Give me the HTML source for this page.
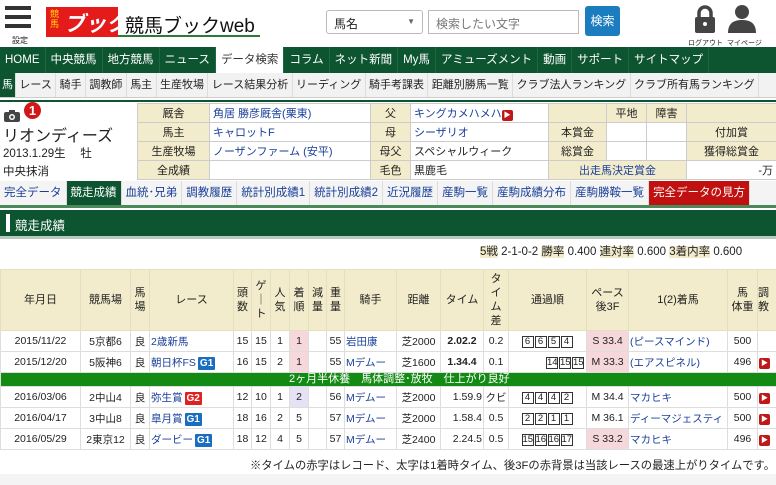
<!DOCTYPE html>
<html><head><meta charset="utf-8">
<style>
*{margin:0;padding:0;box-sizing:border-box}
body{width:776px;height:485px;overflow:hidden;background:#fff;font-family:"Liberation Sans","Noto Sans CJK JP",sans-serif;font-size:11px;color:#222;position:relative}
.a{position:absolute}
a,.lk{color:#1a3f9a;text-decoration:none}
.nav{top:47px;left:0;width:776px;height:26px;background:#0d5430;color:#fff;font-size:11.5px;white-space:nowrap;overflow:hidden}
.nav span{display:inline-block;height:26px;line-height:26px;padding:0 5px;border-right:1px solid #1e6a40}
.sub{top:73px;left:0;width:776px;height:25px;background:#f2f2f2;font-size:11px;white-space:nowrap;border-bottom:1px solid #ccc;overflow:hidden}
.sub span{display:inline-block;height:25px;line-height:25px;padding:0 3.4px;border-right:1px solid #ddd}
table{border-collapse:collapse;table-layout:fixed}
.info td{border:1px solid #ccc;height:19px;padding:0 3px;font-size:11px;white-space:nowrap;overflow:hidden}
.bg{background:#f3eccc;text-align:center}
.tabs{top:181px;left:0;width:776px;height:24px;font-size:11.5px;white-space:nowrap;background:#f4f4f4;overflow:hidden}
.tabs span{display:inline-block;height:24px;line-height:24px;padding:0 4px;border-right:1px solid #ddd;color:#1a3f9a}
.rt td{border:1px solid #ddd;height:21px;text-align:center;font-size:10.5px;white-space:nowrap;overflow:hidden;padding:0 1px}
.rt th{border:1px solid #e4dfc0;background:#f3eccc;font-weight:normal;font-size:11px;line-height:14px;height:61px}
.g{display:inline-block;color:#fff;font-size:10px;font-weight:bold;padding:0 2px;line-height:13px;border-radius:1px;margin-left:2px}
.g1{background:#1a6ec0}.g2{background:#d22}
.bx{display:inline-block;border:1px solid #333;width:12px;height:12px;line-height:10px;font-size:9.5px;margin-right:1px}
.pk{background:#f6d8dc}
.play{display:inline-block;width:11px;height:11px;background:#c01818;border-radius:2px;color:#fff;font-size:7px;line-height:11px;text-align:center}
</style></head><body>
<div class="a" style="left:5px;top:6px;width:26px;height:4px;background:#333"></div>
<div class="a" style="left:5px;top:15px;width:26px;height:4px;background:#333"></div>
<div class="a" style="left:5px;top:24px;width:26px;height:4px;background:#333"></div>
<div class="a" style="left:12px;top:35px;font-size:8px">設定</div>
<div class="a" style="left:46px;top:7px;width:72px;height:30px;background:#e51a1a;"></div>
<div class="a" style="left:50px;top:9px;font-size:9px;line-height:10px;color:#ffd700;width:8px">競馬</div>
<div class="a" style="left:64px;top:8px;font-size:21px;font-style:italic;font-weight:bold;color:#fff;white-space:nowrap">ブック</div>
<div class="a" style="left:118px;top:35px;width:142px;height:2px;background:#2a7a3a"></div>
<div class="a" style="left:125px;top:11px;font-size:19px;color:#111;white-space:nowrap">競馬ブックweb</div>
<div class="a" style="left:326px;top:10px;width:97px;height:24px;border:1px solid #bbb;border-radius:3px;padding:4px 7px;font-size:12px">馬名<span style="position:absolute;right:7px;top:6px;font-size:8px;color:#666">▼</span></div>
<div class="a" style="left:428px;top:10px;width:151px;height:24px;border:1px solid #bbb;padding:4px 7px;font-size:12px;color:#777">検索したい文字</div>
<div class="a" style="left:585px;top:6px;width:35px;height:30px;background:#1b7cc0;border-radius:3px;color:#fff;font-size:12px;line-height:30px;text-align:center">検索</div>
<svg class="a" style="left:694px;top:4px" width="22" height="30"><path d="M5 13V9a6 6 0 0 1 12 0v4" stroke="#444" stroke-width="3.5" fill="none"/><rect x="1" y="13" width="20" height="16" rx="2" fill="#444"/><circle cx="11" cy="20" r="2" fill="#fff"/></svg>
<svg class="a" style="left:727px;top:3px" width="30" height="30"><circle cx="15" cy="9" r="7" fill="#444"/><path d="M1 30c0-10 6-13 14-13s14 3 14 13z" fill="#444"/></svg>
<div class="a" style="left:688px;top:38px;font-size:7px">ログアウト</div>
<div class="a" style="left:727px;top:38px;font-size:7px">マイページ</div>
<div class="a nav"><span>HOME</span><span>中央競馬</span><span>地方競馬</span><span>ニュース</span><span style="background:#fff;color:#333">データ検索</span><span>コラム</span><span>ネット新聞</span><span>My馬</span><span>アミューズメント</span><span>動画</span><span>サポート</span><span>サイトマップ</span></div>
<div class="a sub"><span style="background:#0d5430;color:#fff;padding:0 2px">馬</span><span>レース</span><span>騎手</span><span>調教師</span><span>馬主</span><span>生産牧場</span><span>レース結果分析</span><span>リーディング</span><span>騎手考課表</span><span>距離別勝馬一覧</span><span>クラブ法人ランキング</span><span>クラブ所有馬ランキング</span></div>
<div class="a" style="left:0;top:100px;width:776px;height:2px;background:#0d5430"></div>
<svg class="a" style="left:4px;top:110px" width="16" height="12"><rect x="0" y="2" width="16" height="10" rx="2" fill="#444"/><rect x="5" y="0" width="6" height="3" fill="#444"/><circle cx="8" cy="7" r="3" fill="#fff"/><circle cx="8" cy="7" r="1.5" fill="#444"/></svg>
<div class="a" style="left:24px;top:102px;width:17px;height:17px;border-radius:50%;background:#d01818;color:#fff;font-weight:bold;font-size:13px;text-align:center;line-height:17px">1</div>
<div class="a" style="left:3px;top:122px;font-size:16px">リオンディーズ</div>
<div class="a" style="left:3px;top:145px;font-size:11.5px">2013.1.29生　 牡</div>
<div class="a" style="left:3px;top:163px;font-size:11.5px">中央抹消</div>
<table class="a info" style="left:137px;top:103px;width:639px">
<colgroup><col style="width:72px"><col style="width:161px"><col style="width:40px"><col style="width:138px"><col style="width:58px"><col style="width:40px"><col style="width:40px"><col style="width:90px"></colgroup>
<tr><td class="bg">厩舎</td><td class="lk">角居 勝彦厩舎(栗東)</td><td class="bg">父</td><td class="lk">キングカメハメハ<span class="play">▶</span></td><td class="bg"></td><td class="bg">平地</td><td class="bg">障害</td><td class="bg"></td></tr>
<tr><td class="bg">馬主</td><td class="lk">キャロットF</td><td class="bg">母</td><td class="lk">シーザリオ</td><td class="bg">本賞金</td><td></td><td></td><td class="bg">付加賞</td></tr>
<tr><td class="bg">生産牧場</td><td class="lk">ノーザンファーム (安平)</td><td class="bg">母父</td><td>スペシャルウィーク</td><td class="bg">総賞金</td><td></td><td></td><td class="bg">獲得総賞金</td></tr>
<tr><td class="bg">全成績</td><td></td><td class="bg">毛色</td><td>黒鹿毛</td><td class="bg lk" colspan="3">出走馬決定賞金</td><td style="text-align:right">-万</td></tr>
</table>
<div class="a tabs"><span>完全データ</span><span style="background:#0d5430;color:#fff">競走成績</span><span>血統･兄弟</span><span>調教履歴</span><span>統計別成績1</span><span>統計別成績2</span><span>近況履歴</span><span>産駒一覧</span><span>産駒成績分布</span><span>産駒勝鞍一覧</span><span style="background:#c01010;color:#fff">完全データの見方</span></div>
<div class="a" style="left:0;top:205px;width:776px;height:3px;background:#4a8a5a"></div>
<div class="a" style="left:0;top:210px;width:776px;height:26px;background:#0d5430"></div>
<div class="a" style="left:6px;top:214px;width:4px;height:18px;background:#fff"></div>
<div class="a" style="left:15px;top:215px;color:#fff;font-size:12.5px">競走成績</div>
<div class="a" style="left:0;top:236px;width:776px;height:3px;background:#b8c8bc"></div>
<div class="a" style="left:480px;top:243px;font-size:11.5px;white-space:nowrap;line-height:18px"><span style="background:#f3eccc">5戦</span> 2-1-0-2 <span style="background:#f3eccc">勝率</span> 0.400 <span style="background:#f3eccc">連対率</span> 0.600 <span style="background:#f3eccc">3着内率</span> 0.600</div>
<table class="a rt" style="left:0;top:269px;width:790px">
<colgroup><col style="width:80px"><col style="width:50px"><col style="width:19px"><col style="width:84px"><col style="width:18px"><col style="width:19px"><col style="width:19px"><col style="width:19px"><col style="width:18px"><col style="width:18px"><col style="width:52px"><col style="width:44px"><col style="width:43px"><col style="width:25px"><col style="width:78px"><col style="width:42px"><col style="width:99px"><col style="width:30px"><col style="width:33px"></colgroup>
<tr><th>年月日</th><th>競馬場</th><th>馬<br>場</th><th>レース</th><th>頭<br>数</th><th>ゲ<br>｜<br>ト</th><th>人<br>気</th><th>着<br>順</th><th>減<br>量</th><th>重<br>量</th><th>騎手</th><th>距離</th><th>タイム</th><th>タ<br>イ<br>ム<br>差</th><th>通過順</th><th>ペース<br>後3F</th><th>1(2)着馬</th><th>馬<br>体重</th><th style="text-align:left">調<br>教</th></tr>
<tr><td>2015/11/22</td><td>5京都6</td><td>良</td><td class="lk" style="text-align:left">2歳新馬</td><td>15</td><td>15</td><td>1</td><td class="pk">1</td><td></td><td>55</td><td class="lk" style="text-align:left">岩田康</td><td>芝2000</td><td><b>2.02.2</b></td><td>0.2</td><td><span class="bx">6</span><span class="bx">6</span><span class="bx">5</span><span class="bx">4</span></td><td class="pk">S 33.4</td><td class="lk" style="text-align:left">(ピースマインド)</td><td>500</td><td></td></tr>
<tr><td>2015/12/20</td><td>5阪神6</td><td>良</td><td class="lk" style="text-align:left">朝日杯FS<span class="g g1">G1</span></td><td>16</td><td>15</td><td>2</td><td class="pk">1</td><td></td><td>55</td><td class="lk" style="text-align:left">Mデムー</td><td>芝1600</td><td><b>1.34.4</b></td><td>0.1</td><td style="text-align:right"><span class="bx">14</span><span class="bx">15</span><span class="bx">15</span></td><td class="pk">M 33.3</td><td class="lk" style="text-align:left">(エアスピネル)</td><td>496</td><td style="text-align:left"><span class="play">▶</span></td></tr>
<tr><td colspan="19" style="background:#138a13;color:#fff;height:14px;line-height:13px;font-size:11px;text-align:left;padding-left:288px">2ヶ月半休養　馬体調整･放牧　仕上がり良好</td></tr>
<tr><td>2016/03/06</td><td>2中山4</td><td>良</td><td class="lk" style="text-align:left">弥生賞<span class="g g2">G2</span></td><td>12</td><td>10</td><td>1</td><td style="background:#e4e2f4">2</td><td></td><td>56</td><td class="lk" style="text-align:left">Mデムー</td><td>芝2000</td><td style="text-align:right">1.59.9</td><td>クビ</td><td><span class="bx">4</span><span class="bx">4</span><span class="bx">4</span><span class="bx">2</span></td><td>M 34.4</td><td class="lk" style="text-align:left">マカヒキ</td><td>500</td><td style="text-align:left"><span class="play">▶</span></td></tr>
<tr><td>2016/04/17</td><td>3中山8</td><td>良</td><td class="lk" style="text-align:left">皐月賞<span class="g g1">G1</span></td><td>18</td><td>16</td><td>2</td><td>5</td><td></td><td>57</td><td class="lk" style="text-align:left">Mデムー</td><td>芝2000</td><td style="text-align:right">1.58.4</td><td>0.5</td><td><span class="bx">2</span><span class="bx">2</span><span class="bx">1</span><span class="bx">1</span></td><td>M 36.1</td><td class="lk" style="text-align:left">ディーマジェスティ</td><td>500</td><td style="text-align:left"><span class="play">▶</span></td></tr>
<tr><td>2016/05/29</td><td>2東京12</td><td>良</td><td class="lk" style="text-align:left">ダービー<span class="g g1">G1</span></td><td>18</td><td>12</td><td>4</td><td>5</td><td></td><td>57</td><td class="lk" style="text-align:left">Mデムー</td><td>芝2400</td><td style="text-align:right">2.24.5</td><td>0.5</td><td><span class="bx">15</span><span class="bx">16</span><span class="bx">16</span><span class="bx">17</span></td><td class="pk">S 33.2</td><td class="lk" style="text-align:left">マカヒキ</td><td>496</td><td style="text-align:left"><span class="play">▶</span></td></tr>
</table>
<div class="a" style="left:250px;top:457px;font-size:11.3px;white-space:nowrap">※タイムの赤字はレコード、太字は1着時タイム、後3Fの赤背景は当該レースの最速上がりタイムです。</div>
<div class="a" style="left:0;top:474px;width:776px;height:11px;background:#f4f4f4"></div>
</body></html>
